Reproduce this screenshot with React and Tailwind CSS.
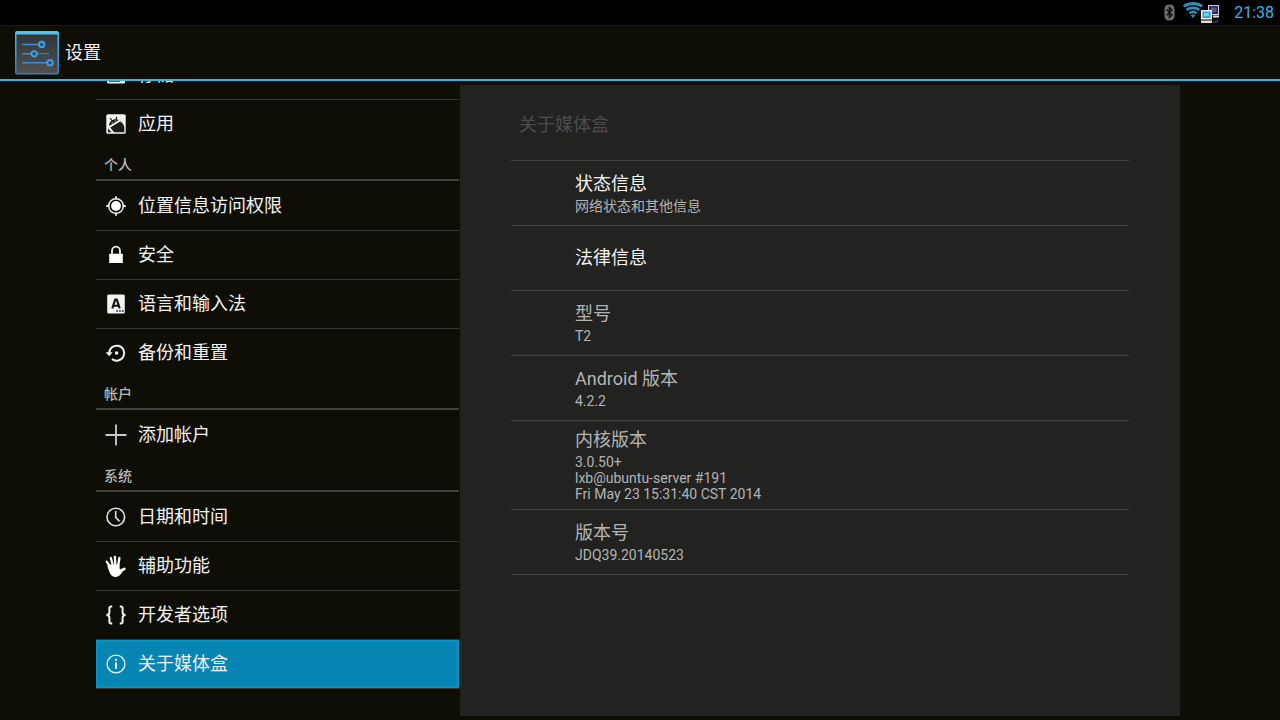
import React from "react";

function BluetoothIcon() {
  return (
    <svg width="11" height="17" viewBox="0 0 11 17" aria-hidden="true">
      <rect x="0.5" y="0.5" width="10" height="16" rx="4.5" fill="#6e6e6e" />
      <path d="M2.6 5.5 8 11 5.4 13.4V3.4L8 6 2.6 11.2" fill="none" stroke="#0a0a0a" strokeWidth="1.3" />
    </svg>
  );
}

function WifiIcon() {
  return (
    <svg width="20" height="17" viewBox="0 0 20 17" aria-hidden="true">
      <g fill="none" stroke="#2b8fb6">
        <path d="M0.9 4.4C6 0.6 14 0.6 19.1 4.4" strokeWidth="3" />
        <path d="M3.6 7.9C7.2 5.2 12.8 5.2 16.4 7.9" strokeWidth="2.8" />
        <path d="M6.4 11.2C8.6 9.6 11.4 9.6 13.6 11.2" strokeWidth="2.5" />
      </g>
      <path d="M7.6 13.2C9 12.2 11 12.2 12.4 13.2L10 16Z" fill="#2b8fb6" />
    </svg>
  );
}

function EthernetIcon() {
  return (
    <svg width="18" height="18" viewBox="0 0 18 18" aria-hidden="true">
      <rect x="7.5" y="0.5" width="10" height="9" fill="#2b2a5c" stroke="#cfcfda" />
      <rect x="9.5" y="2.5" width="6" height="4.5" fill="#55548c" />
      <path d="M12 10.5h6v2h-6z" fill="#dedede" />
      <path d="M12 17h4.5v-3" fill="none" stroke="#37366e" strokeWidth="1.6" />
      <rect x="0.75" y="5.75" width="9.5" height="8" fill="#1e9fcb" stroke="#ededed" strokeWidth="1.5" />
      <rect x="3" y="7.8" width="5" height="3.6" fill="#6fd0ee" />
      <path d="M0 15.5h11v2.5H0z" fill="#dedede" />
    </svg>
  );
}

function SettingsLogo() {
  return (
    <svg width="44" height="44" viewBox="0 0 44 44" aria-hidden="true">
      <defs>
        <linearGradient id="plate" x1="0" y1="0" x2="0" y2="1">
          <stop offset="0" stopColor="#343536" />
          <stop offset="1" stopColor="#505050" />
        </linearGradient>
        <linearGradient id="frame" x1="0" y1="0" x2="0" y2="1">
          <stop offset="0" stopColor="#46bdf0" />
          <stop offset="1" stopColor="#2f7fc8" />
        </linearGradient>
      </defs>
      <rect x="0.75" y="0.75" width="42.5" height="42" rx="1.5" fill="url(#plate)" stroke="url(#frame)" strokeWidth="1.5" />
      <rect x="1" y="0.5" width="42" height="3" rx="1" fill="#4cc6f5" />
      <g stroke="#1f3d5c" strokeWidth="1.2">
        <path d="M27 13.5h10.5M19 22.8h18.5" />
      </g>
      <g stroke="#3c8fd6" strokeWidth="1.5" strokeLinecap="round">
        <path d="M8 13.5h16M8 22.8h8M8 31.7h24" />
        <path d="M22 22.8h12" strokeWidth="1" />
      </g>
      <g fill="#3b4a58" stroke="#3f9fe6" strokeWidth="1.9">
        <circle cx="26.7" cy="13.5" r="2.7" />
        <circle cx="19.2" cy="22.8" r="2.7" />
        <circle cx="35" cy="31.7" r="2.7" />
      </g>
    </svg>
  );
}

const icons = {
  storage: (
    <>
      <rect x="1" y="1" width="18" height="17.5" rx="1" fill="#f2f2f2" />
      <path d="M3 16h11" stroke="#222" strokeWidth="1.4" />
    </>
  ),
  apps: (
    <>
      <rect x="0.3" y="0.3" width="19.4" height="19.4" rx="1.5" fill="#f2f2f2" />
      <path d="M3 11.4C3.2 7 8 3.8 12.8 6L4 11.4Z" fill="#1c1c17" />
      <path d="M4.2 4 6 6.8M10.6 2.6 10.2 6" stroke="#1c1c17" strokeWidth="1.1" />
      <path d="M4.2 13.6 14.2 7.4C16.4 8.4 18.2 11.2 18.3 13.6V18.3H8Z" fill="#1c1c17" />
      <path d="M2 14.5 5.6 18.3H2Z" fill="#1c1c17" />
      <circle cx="6.2" cy="8.8" r="0.6" fill="#eee" />
      <circle cx="9.3" cy="7" r="0.6" fill="#eee" />
    </>
  ),
  location: (
    <>
      <circle cx="10" cy="10" r="7.3" fill="none" stroke="#f2f2f2" strokeWidth="1.4" />
      <circle cx="10" cy="10" r="4.9" fill="#fff" />
      <path d="M10 0.3v3M10 16.7v3M0.3 10h3M16.7 10h3" stroke="#f2f2f2" strokeWidth="1.8" />
    </>
  ),
  lock: (
    <>
      <path d="M6 9.5V6a4 4.3 0 0 1 8 0v3.5" fill="none" stroke="#f2f2f2" strokeWidth="1.8" />
      <rect x="3.2" y="8.8" width="13.6" height="9.2" rx="0.5" fill="#fff" />
    </>
  ),
  language: (
    <>
      <rect x="1.2" y="0.5" width="17.6" height="19" rx="1.5" fill="#f2f2f2" />
      <path d="M6.3 14.4 9.2 5.6h1.6l2.9 8.8M7.4 11.8h5.2" fill="none" stroke="#15150f" strokeWidth="2.1" />
      <path d="M10.4 17h1.6M13.2 17h1.6M16 17h1.6" stroke="#15150f" strokeWidth="1.5" />
    </>
  ),
  backup: (
    <>
      <path d="M3.2 10.2A7.5 7.5 0 1 1 6 16" fill="none" stroke="#f2f2f2" strokeWidth="2" />
      <path d="M-0.4 9.2h7L3.2 13.2Z" fill="#f2f2f2" />
      <circle cx="10.6" cy="10" r="1.8" fill="#f2f2f2" />
    </>
  ),
  add: <path d="M10 -0.5v21M-0.5 10h21" stroke="#c9cdc9" strokeWidth="1.8" />,
  clock: (
    <>
      <circle cx="9.8" cy="10" r="8.8" fill="none" stroke="#e2e2e2" strokeWidth="1.6" />
      <path d="M9.7 4v6.2l3.8 4.2" fill="none" stroke="#e2e2e2" strokeWidth="1.6" />
    </>
  ),
  hand: (
    <>
      <g stroke="#fff" strokeLinecap="round" strokeWidth="2.3" fill="none">
        <path d="M5.2 12 0.8 5.8M7 10 4.8 2M9.4 10 8.9 0.8M12 10.5 13.4 2" />
        <path d="M12.5 16.5 18.4 12.8" strokeWidth="2.6" />
      </g>
      <path d="M3.2 8.8 13.3 8.2 13.8 13.2 17.6 12.2C17.4 15.5 13.5 21 9.4 21 5.2 21 3.6 17.4 2.2 12.6L1.2 9.6Z" fill="#fff" />
    </>
  ),
  braces: (
    <g fill="none" stroke="#f0f0f0" strokeWidth="2">
      <path d="M6.2 1.4H5.2Q3.4 1.4 3.4 3.4V7.4Q3.4 9.6 0.5 9.9 3.4 10.2 3.4 12.4V16.5Q3.4 18.4 5.2 18.4H6.2" />
      <path d="M13.8 1.4H14.8Q16.6 1.4 16.6 3.4V7.4Q16.6 9.6 19.5 9.9 16.6 10.2 16.6 12.4V16.5Q16.6 18.4 14.8 18.4H13.8" />
    </g>
  ),
  info: (
    <>
      <circle cx="10" cy="10" r="8.9" fill="none" stroke="#e4f3f9" strokeWidth="1.4" />
      <path d="M10 8.4v6.4" stroke="#f4fafd" strokeWidth="2" />
      <circle cx="10" cy="5.8" r="1.1" fill="#f4fafd" />
    </>
  ),
};

const sections = [
  {
    items: [
      { icon: "storage", label: "存储" },
      { icon: "apps", label: "应用", last: true },
    ],
  },
  {
    title: "个人",
    items: [
      { icon: "location", label: "位置信息访问权限" },
      { icon: "lock", label: "安全" },
      { icon: "language", label: "语言和输入法" },
      { icon: "backup", label: "备份和重置", last: true },
    ],
  },
  { title: "帐户", items: [{ icon: "add", label: "添加帐户", last: true }] },
  {
    title: "系统",
    items: [
      { icon: "clock", label: "日期和时间" },
      { icon: "hand", label: "辅助功能" },
      { icon: "braces", label: "开发者选项" },
      { icon: "info", label: "关于媒体盒", selected: true },
    ],
  },
];

const details = [
  { title: "状态信息", lines: ["网络状态和其他信息"], action: true },
  { title: "法律信息", lines: [], action: true },
  { title: "型号", lines: ["T2"] },
  { title: "Android 版本", lines: ["4.2.2"] },
  { title: "内核版本", lines: ["3.0.50+", "lxb@ubuntu-server #191", "Fri May 23 15:31:40 CST 2014"] },
  { title: "版本号", lines: ["JDQ39.20140523"] },
];

function NavItem({ item }) {
  return (
    <li className={`border-b ${item.last ? "border-transparent" : "border-[#343431]"}`}>
      <a
        href="#"
        aria-current={item.selected ? "page" : undefined}
        className={`flex h-12 items-center gap-3 border-2 pl-2 text-lg text-[#f3f3f3] ${
          item.selected ? "border-[#0a92c2] bg-[#0886b3]" : "border-transparent"
        }`}
      >
        <svg className="shrink-0 overflow-visible" width="20" height="20" viewBox="0 0 20 20" aria-hidden="true">
          {icons[item.icon]}
        </svg>
        <span>{item.label}</span>
      </a>
    </li>
  );
}

function Detail({ entry }) {
  const body = (
    <>
      <span className={`text-lg leading-6 ${entry.action ? "text-[#f3f3f3]" : "text-[#b4b4b3]"}`}>{entry.title}</span>
      {entry.lines.length > 0 && (
        <span className="mt-0.5 flex flex-col text-sm leading-4 text-[#b4b4b3]">
          {entry.lines.map((line) => (
            <span key={line}>{line}</span>
          ))}
        </span>
      )}
    </>
  );
  const layout = "flex min-h-16 w-full flex-col justify-center py-[7px] pl-16 text-left";
  return (
    <li className="border-b border-[#424241]">
      {entry.action ? (
        <button type="button" className={layout}>{body}</button>
      ) : (
        <div className={layout}>{body}</div>
      )}
    </li>
  );
}

export default function App() {
  return (
    <div className="flex h-screen flex-col overflow-hidden bg-[#0e0e07] font-[Roboto,'Noto_Sans_CJK_SC',sans-serif]">
      <div className="flex h-[25px] shrink-0 items-center justify-end bg-black pr-1.5">
        <BluetoothIcon />
        <div className="ml-2 flex items-end">
          <div className="pb-1">
            <WifiIcon />
          </div>
          <div className="-ml-0.5">
            <EthernetIcon />
          </div>
        </div>
        <time className="ml-[15px] text-base leading-6 text-[#33b5e5]">21:38</time>
      </div>
      <header className="flex h-14 shrink-0 items-center gap-1.5 border-b-2 border-t border-b-[#33b5e5] border-t-[#1b1b17] pl-[15px]">
        <SettingsLogo />
        <h1 className="text-lg text-[#f3f3f3]">设置</h1>
      </header>
      <main className="grid min-h-0 flex-1 grid-cols-[minmax(0,364fr)_minmax(0,720fr)] pl-24 pr-[100px]">
        <nav aria-label="设置" className="overflow-hidden pr-px">
          <div className="-mt-[30px]">
            {sections.map((section, index) => (
              <section key={index}>
                {section.title && (
                  <h2 className="mb-px flex h-8 items-center border-b-2 border-[#41413f] pl-2 pt-0.5 text-sm font-medium text-[#b9b9b7]">
                    {section.title}
                  </h2>
                )}
                <ul>
                  {section.items.map((item) => (
                    <NavItem key={item.label} item={item} />
                  ))}
                </ul>
              </section>
            ))}
          </div>
        </nav>
        <section className="mb-1 mt-1 bg-[#222221] px-[51px]">
          <h2 className="flex h-[76px] items-center border-b border-[#424241] pl-2 pt-1 text-lg text-[#4c4c4b]">关于媒体盒</h2>
          <ul>
            {details.map((entry) => (
              <Detail key={entry.title} entry={entry} />
            ))}
          </ul>
        </section>
      </main>
    </div>
  );
}
